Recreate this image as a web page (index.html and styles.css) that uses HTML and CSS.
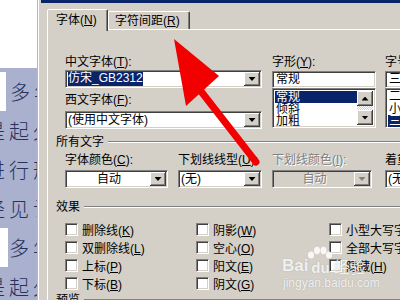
FILE: index.html
```html
<!DOCTYPE html>
<html>
<head>
    <link rel="stylesheet" href="styles.css">
</head>
<body>
    <!-- document behind the dialog -->
    <div class="doc">
        <div class="para para-1">
            <div class="line first"><span class="indent"></span>多年来</div>
            <div class="line">是起久</div>
            <div class="line">进行形</div>
            <div class="line">经见认</div>
        </div>
        <div class="para para-2">
            <div class="line first"><span class="indent wide"></span>多年来</div>
            <div class="line">是起久</div>
        </div>
    </div>

    <!-- font dialog -->
    <div class="dialog">
        <div class="titlebar"></div>
        <div class="dlg-body">
            <div class="tabs">
                <div class="tab active">字体(<u>N</u>)</div>
                <div class="tab">字符间距(<u>R</u>)</div>
            </div>
            <div class="page">
                <div class="font-row">
                    <div class="col col-name">
                        <div class="lbl">中文字体(<u>T</u>):</div>
                        <div class="combo"><span class="val"><span class="sel">仿宋_GB2312</span></span><span class="drop"></span></div>
                        <div class="lbl lbl-2">西文字体(<u>F</u>):</div>
                        <div class="combo combo-2"><span class="val">(使用中文字体)</span><span class="drop"></span></div>
                    </div>
                    <div class="col col-style">
                        <div class="lbl">字形(<u>Y</u>):</div>
                        <div class="edit">常规</div>
                        <div class="list">
                            <div class="items">
                                <div class="item sel">常规</div>
                                <div class="item">倾斜</div>
                                <div class="item">加粗</div>
                            </div>
                            <div class="scroll">
                                <span class="sb up"></span>
                                <span class="track"></span>
                                <span class="sb down"></span>
                            </div>
                        </div>
                    </div>
                    <div class="col col-size">
                        <div class="lbl">字号(<u>S</u>):</div>
                        <div class="edit">三号</div>
                        <div class="list">
                            <div class="items">
                                <div class="item">二号</div>
                                <div class="item">小二</div>
                                <div class="item sel">三号</div>
                            </div>
                        </div>
                    </div>
                </div>

                <div class="group group-all"><span class="glbl">所有文字</span><span class="gline"></span></div>
                <div class="attr-row">
                    <div class="attr a-color">
                        <div class="lbl">字体颜色(<u>C</u>):</div>
                        <div class="combo"><span class="val center">自动</span><span class="drop"></span></div>
                    </div>
                    <div class="attr a-uline">
                        <div class="lbl">下划线线型(<u>U</u>):</div>
                        <div class="combo"><span class="val">(无)</span><span class="drop"></span></div>
                    </div>
                    <div class="attr a-ucolor disabled">
                        <div class="lbl">下划线颜色(<u>I</u>):</div>
                        <div class="combo"><span class="val center">自动</span><span class="drop"></span></div>
                    </div>
                    <div class="attr a-emph">
                        <div class="lbl">着重号(·):</div>
                        <div class="combo"><span class="val">(无)</span></div>
                    </div>
                </div>

                <div class="group group-fx"><span class="glbl">效果</span><span class="gline"></span></div>
                <div class="effects">
                    <label class="chk"><span class="box"></span><span>删除线(<u>K</u>)</span></label>
                    <label class="chk"><span class="box"></span><span>阴影(<u>W</u>)</span></label>
                    <label class="chk"><span class="box"></span><span>小型大写字母(<u>M</u>)</span></label>
                    <label class="chk"><span class="box"></span><span>双删除线(<u>L</u>)</span></label>
                    <label class="chk"><span class="box"></span><span>空心(<u>O</u>)</span></label>
                    <label class="chk"><span class="box"></span><span>全部大写字母(<u>A</u>)</span></label>
                    <label class="chk"><span class="box"></span><span>上标(<u>P</u>)</span></label>
                    <label class="chk"><span class="box"></span><span>阳文(<u>E</u>)</span></label>
                    <label class="chk"><span class="box"></span><span>隐藏(<u>H</u>)</span></label>
                    <label class="chk"><span class="box"></span><span>下标(<u>B</u>)</span></label>
                    <label class="chk"><span class="box"></span><span>阴文(<u>G</u>)</span></label>
                </div>

                <div class="group group-pv"><span class="glbl">预览</span><span class="gline"></span></div>
            </div>
        </div>
    </div>

    <!-- watermark -->
    <div class="watermark">
        <div class="wm-logo">
            <span class="wm-bai">Bai</span>
            <span class="wm-paw">
                <svg width="26" height="13" viewBox="0 0 26 13">
                    <ellipse cx="4" cy="9" rx="3" ry="3.5"/>
                    <ellipse cx="10" cy="4.5" rx="3" ry="3.8"/>
                    <ellipse cx="16.5" cy="4.5" rx="3" ry="3.8"/>
                    <ellipse cx="22" cy="9" rx="3" ry="3.5"/>
                </svg>
                <span class="wm-du">du</span>
            </span>
            <span class="wm-jy">经验</span>
        </div>
        <div class="wm-url">jingyan.baidu.com</div>
    </div>

    <!-- red pointer arrow -->
    <svg class="arrow" width="400" height="300" viewBox="0 0 400 300">
        <line x1="200" y1="90" x2="256" y2="162" stroke="#f20000" stroke-width="7" stroke-linecap="round"/>
        <polygon points="174,39 219,76 186,106" fill="#f20000"/>
    </svg>
</body>
</html>
```

FILE: styles.css
```css
* {
    box-sizing: border-box;
}

body {
    margin: 0;
    width: 400px;
    height: 300px;
    overflow: hidden;
    display: flex;
    position: relative;
    background: #fff;
    font-family: "Liberation Sans", "Noto Sans CJK SC", sans-serif;
    font-size: 12px;
    color: #000;
}

/* document behind */
.doc {
    width: 37px;
    flex: none;
    padding-top: 68px;
    overflow: hidden;
    background: #fff;
}

.para {
    background: #a9b1cf; /* selection colour */
}

.para-1 {
    padding-top: 4px;
}

.line {
    height: 39px;
    line-height: 39px;
    white-space: nowrap;
    font-family: "Noto Sans CJK SC", sans-serif;
    font-size: 20px;
    font-weight: 300;
    letter-spacing: 4px;
    color: #28305c;
    text-indent: -15px;
}

.line.first {
    text-indent: 0;
}

.indent {
    display: inline-block;
    width: 6px;
    height: 39px;
    margin-right: 4px;
    background: #fff;
    vertical-align: top;
}

.indent.wide {
    width: 8px;
    margin-right: 1px;
}

/* dialog frame */
.dialog {
    flex: none;
    width: 363px;
    background: #d4d0c8;
    border-left: 1px solid #bdb9b1;
    box-shadow: inset 1px 0 #fff;
    padding-left: 3px;
    overflow: hidden;
}

.titlebar {
    height: 3px;
    background: #0a246a;
}

.dlg-body {
    padding: 6px 0 0 6px;
}

.tabs {
    display: flex;
    align-items: flex-end;
    height: 20px;
    position: relative;
    z-index: 1;
}

.tab {
    flex: none;
    width: 82px;
    height: 18px;
    padding: 1px 0 0 6px;
    line-height: 16px;
    white-space: nowrap;
    border: 1px solid;
    border-bottom: none;
    border-color: #fff #404040 transparent #fff;
    box-shadow: inset -1px 0 #808080;
    border-radius: 2px 2px 0 0;
}

.tab.active {
    width: 61px;
    height: 22px;
    margin-bottom: -2px;
    padding: 2px 0 0 8px;
    background: #d4d0c8;
}

.page {
    height: 280px;
    border-top: 1px solid #fff;
    border-left: 1px solid #fff;
    padding: 25px 0 0 8px;
}

.lbl {
    height: 14px;
    line-height: 14px;
    white-space: nowrap;
}

u {
    text-decoration: underline;
    text-underline-offset: 1px;
}

/* sunken fields */
.combo,
.edit,
.list,
.box {
    background: #fff;
    border: 1px solid;
    border-color: #808080 #fff #fff #808080;
    box-shadow: inset 1px 1px #404040, inset -1px -1px #d4d0c8;
}

.combo {
    display: flex;
    height: 18px;
    margin-top: 1px;
    padding: 1px;
}

.combo .val {
    flex: 1;
    min-width: 0;
    padding-left: 1px;
    line-height: 14px;
    white-space: nowrap;
}

.combo .val.center {
    text-align: center;
}

.sel {
    background: #0a246a;
    color: #fff;
}

.combo .sel {
    display: inline-block;
    vertical-align: top;
    height: 14px;
    padding-top: 1px;
    line-height: 10px;
}

.drop {
    width: 16px;
    flex: none;
    display: flex;
    align-items: center;
    justify-content: center;
    background: #d4d0c8;
    box-shadow: inset -1px -1px #404040, inset 1px 1px #fff, inset -2px -2px #808080;
}

.drop::after,
.sb::after {
    content: "";
    width: 7px;
    height: 4px;
    background: #000;
    clip-path: polygon(0 0, 100% 0, 50% 100%);
}

.sb.up::after {
    clip-path: polygon(50% 0, 100% 100%, 0 100%);
}

/* font name / style / size */
.font-row {
    display: flex;
    margin-left: 9px;
}

.col-name {
    width: 197px;
    flex: none;
    margin-right: 10px;
}

.lbl-2 {
    margin-top: 5px;
}

.combo-2 {
    margin-top: 4px;
}

.col-style {
    width: 104px;
    flex: none;
    margin-right: 9px;
}

.col-size {
    width: 60px;
    flex: none;
}

.edit {
    height: 17px;
    margin-top: 2px;
    padding: 1px 3px;
    line-height: 13px;
    white-space: nowrap;
}

.list {
    display: flex;
    height: 40px;
    padding: 2px;
    overflow: hidden;
}

.items {
    flex: 1;
    min-width: 0;
}

.item {
    height: 12px;
    line-height: 12px;
    padding-left: 1px;
    white-space: nowrap;
}

.col-size .items {
    margin-top: -1px;
}

.col-size .item {
    height: 12.5px;
}

.scroll {
    width: 16px;
    flex: none;
    display: flex;
    flex-direction: column;
}

.sb {
    height: 15px;
    display: flex;
    align-items: center;
    justify-content: center;
    background: #d4d0c8;
    box-shadow: inset -1px -1px #404040, inset 1px 1px #fff, inset -2px -2px #808080;
}

.track {
    flex: 1;
    background-image: repeating-conic-gradient(#fff 0 25%, #d4d0c8 0 50%);
    background-size: 2px 2px;
}

/* group headings */
.group {
    display: flex;
    align-items: center;
    height: 14px;
}

.glbl {
    line-height: 14px;
    padding-right: 4px;
    white-space: nowrap;
}

.gline {
    flex: 1;
    height: 2px;
    border-top: 1px solid #808080;
    border-bottom: 1px solid #fff;
}

.group-all {
    margin-top: 6px;
}

.group-fx {
    margin-top: 12px;
}

.group-pv {
    margin-top: 1px;
}

/* colour / underline row */
.attr-row {
    display: flex;
    margin: 4px 0 0 9px;
}

.attr {
    flex: none;
}

.attr .combo {
    margin-top: 3px;
}

.a-color {
    width: 103px;
    margin-right: 10px;
}

.a-uline {
    width: 84px;
    margin-right: 10px;
}

.a-ucolor {
    width: 100px;
    margin-right: 13px;
}

.a-emph {
    width: 60px;
}

.disabled {
    color: #808080;
    text-shadow: 1px 1px #fff;
}

.disabled .combo {
    background: #d4d0c8;
}

.disabled .drop::after {
    background: #808080;
}

/* effects */
.effects {
    display: grid;
    grid-template-columns: 131px 133px 120px;
    grid-auto-rows: 18px;
    margin: 6px 0 0 9px;
}

.chk {
    display: flex;
    align-items: center;
    gap: 4px;
    white-space: nowrap;
}

.box {
    width: 13px;
    height: 13px;
    flex: none;
}

/* watermark */
.watermark {
    position: absolute;
    left: 282px;
    top: 244px;
    color: rgba(255, 255, 255, 0.85);
    text-shadow: 0 0 1px rgba(120, 120, 120, 0.5);
}

.wm-logo {
    display: flex;
    align-items: flex-end;
    height: 32px;
}

.wm-bai {
    font-family: "Liberation Sans", sans-serif;
    font-weight: bold;
    font-size: 17px;
    line-height: 20px;
}

.wm-paw {
    display: flex;
    flex-direction: column;
    align-items: center;
    width: 24px;
}

.wm-paw svg {
    fill: rgba(255, 255, 255, 0.85);
}

.wm-du {
    font-family: "Liberation Sans", sans-serif;
    font-weight: bold;
    font-size: 15px;
    line-height: 17px;
}

.wm-jy {
    font-family: "Noto Sans CJK SC", sans-serif;
    font-size: 16px;
    line-height: 20px;
    margin-left: 1px;
}

.wm-url {
    font-family: "Liberation Sans", sans-serif;
    font-size: 12px;
    line-height: 14px;
    margin-left: 1px;
}

/* pointer */
.arrow {
    position: absolute;
    left: 0;
    top: 0;
    pointer-events: none;
}
```
